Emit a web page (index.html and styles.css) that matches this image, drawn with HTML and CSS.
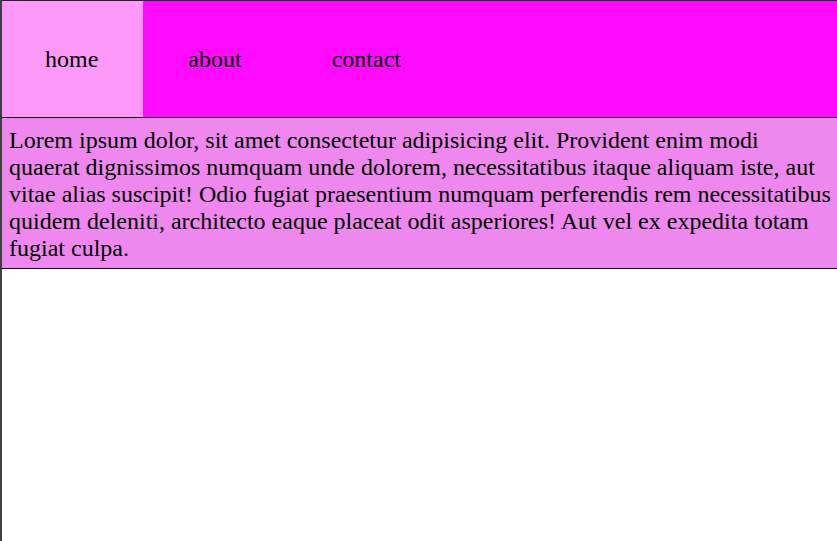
FILE: index.html
```
<!DOCTYPE html>
<html>
<head>
<meta charset="utf-8">
<link rel="stylesheet" href="styles.css">
</head>
<body>
<div class="page">
  <nav class="nav">
    <a class="tab tab-active">home</a>
    <a class="tab">about</a>
    <a class="tab">contact</a>
  </nav>
  <p class="content">Lorem ipsum dolor, sit amet consectetur adipisicing elit. Provident enim modi quaerat dignissimos numquam unde dolorem, necessitatibus itaque aliquam iste, aut vitae alias suscipit! Odio fugiat praesentium numquam perferendis rem necessitatibus quidem deleniti, architecto eaque placeat odit asperiores! Aut vel ex expedita totam fugiat culpa.</p>
</div>
</body>
</html>
```
FILE: styles.css
```
html, body {
  margin: 0;
  padding: 0;
  background: #ffffff;
}
body {
  font-family: "Liberation Serif", "Times New Roman", serif;
  color: #000000;
}
.page {
  min-height: 100vh;
  box-sizing: border-box;
  border-left: 2px solid #404040;
}
.nav {
  display: flex;
  gap: 4px;
  background: #ff0aff;
  border-top: 1px solid #222222;
  border-bottom: 1px solid #000000;
}
.tab {
  font-size: 24px;
  padding: 44px 43px;
  line-height: 28px;
}
.tab-active {
  background: #ff99f9;
  margin-right: -2px;
  padding-right: 45px;
}
.content {
  margin: 0;
  background: #ee88ee;
  border-bottom: 1px solid #000000;
  font-size: 24px;
  line-height: 27px;
  padding: 9px 2px 6px 7px;
}
```
